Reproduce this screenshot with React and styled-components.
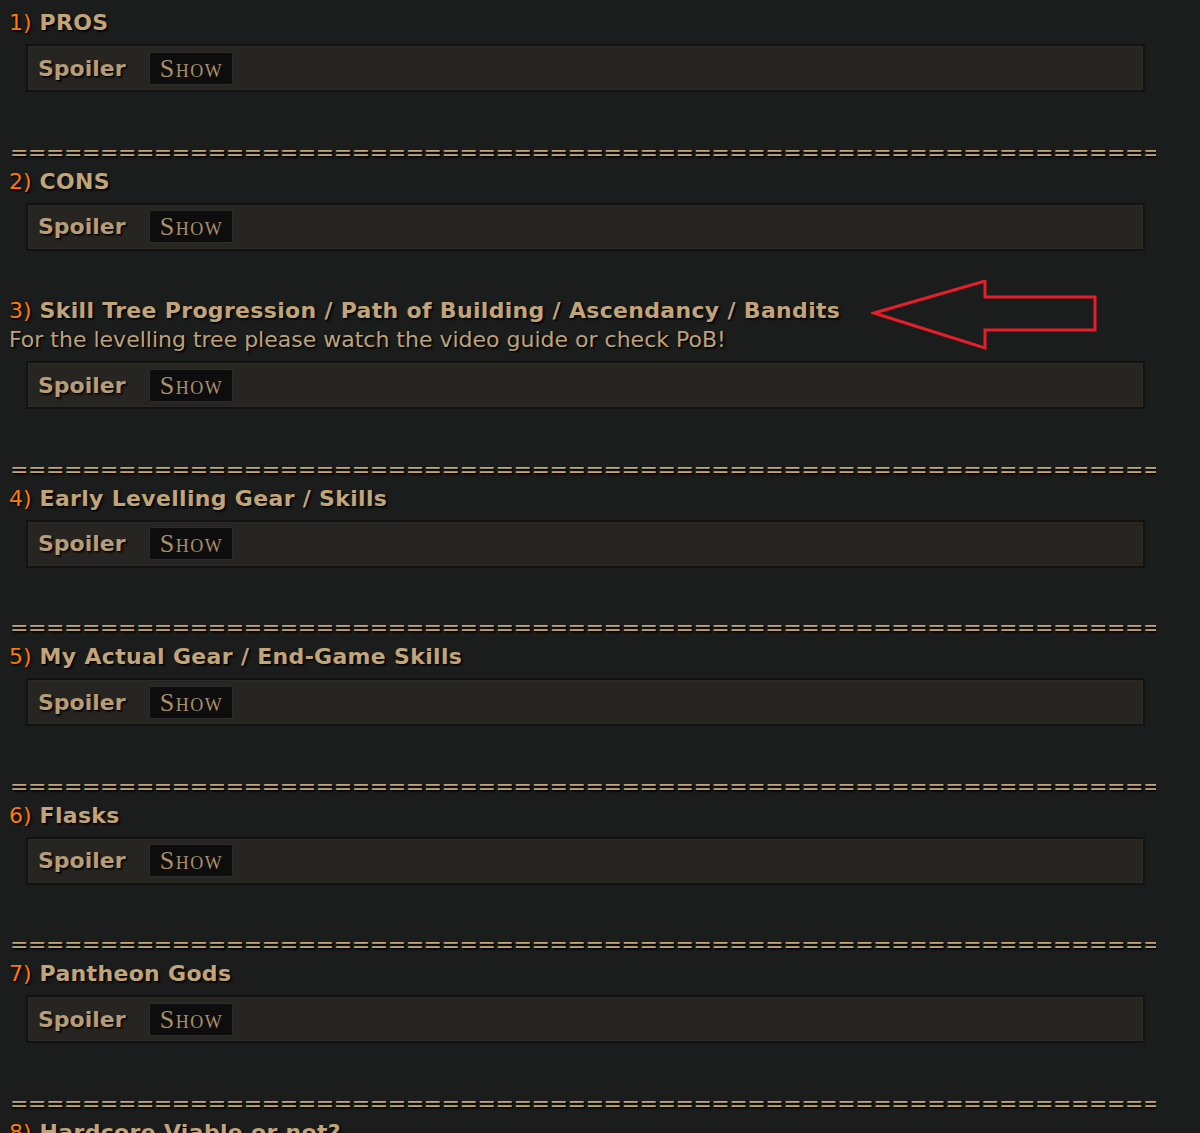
import React from "react";
import styled, { createGlobalStyle } from "styled-components";

const Global = createGlobalStyle`
  html, body { margin: 0; padding: 0; background: #1b1c1c; }
  body { overflow: hidden; }
`;

const Page = styled.div`
  width: 1200px;
  height: 1133px;
  overflow: hidden;
  background: #1b1c1c;
  font-family: "DejaVu Sans", Verdana, sans-serif;
  font-size: 22px;
  line-height: 29px;
  color: #c1a477;
  text-shadow: 1px 1px 1px #000, 2px 2px 2px rgba(0, 0, 0, 0.6);
`;

const Content = styled.div`
  width: 1147px;
  padding-left: 9px;
  margin-top: -21px;
`;

const Section = styled.section`
  position: relative;
  padding-bottom: 45.5px;
`;

const Separator = styled.div`
  white-space: nowrap;
  overflow: hidden;
  letter-spacing: -0.45px;
  height: 29px;
  padding-left: 1px;
`;

const Heading = styled.div`
  font-weight: bold;
  white-space: nowrap;
  letter-spacing: 0.32px;
`;

const Num = styled.span`
  color: #ff7a00;
  font-weight: normal;
  letter-spacing: 0;
`;

const Sub = styled.div`
  color: #bda27a;
`;

const Spoiler = styled.div`
  margin: 7px 11px 0 17px;
  height: 48px;
  box-sizing: border-box;
  background: #262521;
  border: 2px solid #121212;
  box-shadow: inset 0 0 0 1px #2b2a26;
  display: flex;
  align-items: center;
  padding-left: 10px;
  gap: 23px;
`;

const SpoilerLabel = styled.span`
  font-weight: bold;
  color: #b79c75;
`;

const ShowButton = styled.button`
  width: 84px;
  height: 33px;
  box-sizing: border-box;
  background: #0d0d0d;
  border: 1px solid #2c2c2a;
  border-radius: 2px;
  padding: 0 0 0 2px;
  font-family: "Liberation Serif", "Times New Roman", serif;
  font-variant: small-caps;
  font-size: 26px;
  letter-spacing: 1.5px;
  line-height: 31px;
  color: #a98f6b;
  text-shadow: none;
  cursor: pointer;
`;

const Arrow = styled.svg`
  position: absolute;
  left: 862px;
  top: -16px;
`;

const sections = [
  { n: 1, title: "PROS", sep: true },
  { n: 2, title: "CONS", sep: true },
  {
    n: 3,
    title: "Skill Tree Progression / Path of Building / Ascendancy / Bandits",
    sub: "For the levelling tree please watch the video guide or check PoB!",
    arrow: true,
  },
  { n: 4, title: "Early Levelling Gear / Skills", sep: true },
  { n: 5, title: "My Actual Gear / End-Game Skills", sep: true },
  { n: 6, title: "Flasks", sep: true },
  { n: 7, title: "Pantheon Gods", sep: true },
  { n: 8, title: "Hardcore Viable or not?", sep: true, noBox: true },
];

const EQ = "=".repeat(72);

export default function App() {
  return (
    <Page>
      <Global />
      <Content>
        {sections.map((s) => (
          <Section key={s.n}>
            {s.sep && <Separator>{EQ}</Separator>}
            <Heading>
              <Num>{s.n})</Num> {s.title}
            </Heading>
            {s.sub && <Sub>{s.sub}</Sub>}
            {s.arrow && (
              <Arrow width="240" height="76" viewBox="0 0 240 76">
                <polygon
                  points="3,33 114,1 114,17 224,17 224,50 114,50 114,68"
                  fill="none"
                  stroke="#e61e29"
                  strokeWidth="3"
                  strokeLinejoin="miter"
                />
              </Arrow>
            )}
            {!s.noBox && (
              <Spoiler>
                <SpoilerLabel>Spoiler</SpoilerLabel>
                <ShowButton>Show</ShowButton>
              </Spoiler>
            )}
          </Section>
        ))}
      </Content>
    </Page>
  );
}
